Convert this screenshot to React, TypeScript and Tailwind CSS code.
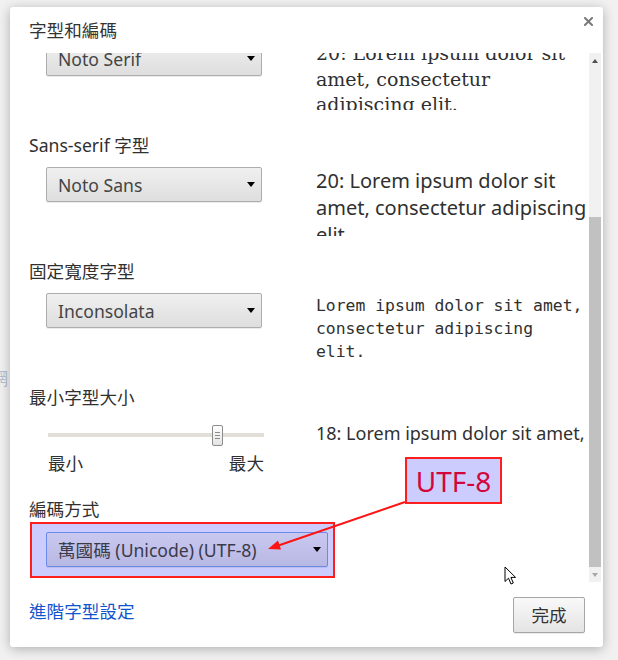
import { useLayoutEffect, useRef } from 'react';

function Caret({ color = 'border-t-black' }: { color?: string }) {
  return (
    <span
      className={`block h-0 w-0 border-x-4 border-t-[5px] border-x-transparent ${color}`}
    />
  );
}

interface SelectProps {
  value: string;
  className?: string;
}

function Select({ value, className = '' }: SelectProps) {
  return (
    <div
      className={`flex h-[35px] items-center justify-between rounded-[2px] border pl-[11px] pr-[6px] text-[17.6px] leading-[24px] shadow-[0_1px_0_rgba(0,0,0,0.08)] ${className}`}
    >
      <span className="whitespace-nowrap">{value}</span>
      <Caret />
    </div>
  );
}

const plainSelect =
  'w-[216px] border-[#adadad] bg-linear-to-b from-[#f0f0f0] to-[#dedede] text-[#444]';

function Section({
  label,
  children,
  className = '',
}: {
  label: string;
  children: React.ReactNode;
  className?: string;
}) {
  return (
    <div className={className}>
      <div className="text-[17.6px] leading-[24px]">{label}</div>
      {children}
    </div>
  );
}

function FontRow({
  font,
  sampleClass,
  lines,
}: {
  font: string;
  sampleClass: string;
  lines: string[];
}) {
  return (
    <div className="mt-[10px] flex h-[69px]">
      <div className="ml-[17px] shrink-0">
        <Select value={font} className={plainSelect} />
      </div>
      <div
        className={`ml-[54px] flex-1 overflow-hidden whitespace-nowrap text-[#303030] ${sampleClass}`}
      >
        {lines.map((line) => (
          <div key={line}>{line}</div>
        ))}
      </div>
    </div>
  );
}

export default function App() {
  const paneRef = useRef<HTMLDivElement>(null);

  // the settings pane is scrolled all the way down
  useLayoutEffect(() => {
    const el = paneRef.current;
    if (el) el.scrollTop = el.scrollHeight;
  }, []);

  return (
    <div className="relative h-[660px] w-[618px] overflow-hidden bg-[#f1f1f1] pl-[10px] pt-[7px] font-['Noto_Sans','Noto_Sans_CJK_TC',sans-serif] text-[#303030]">
      {/* page behind the overlay */}
      <span className="absolute left-[-9px] top-[367px] text-[17px] leading-[24px] text-[#b7bfcf]">
        網
      </span>

      {/* Dialog */}
      <div className="relative flex h-[640px] w-[593px] flex-col rounded-[3px] bg-white shadow-[0_2px_12px_rgba(0,0,0,0.28)]">
        <div className="h-[46px] shrink-0 pl-[19px] pt-[11px] text-[17.6px] leading-[24px] text-[#333]">
          字型和編碼
        </div>
        <button className="absolute right-[10px] top-[10px] flex h-[9px] w-[9px] items-center justify-center">
          <svg width="9" height="9" viewBox="0 0 9 9">
            <path
              d="M1 1 L8 8 M8 1 L1 8"
              stroke="#7a7a7a"
              strokeWidth="2"
              strokeLinecap="square"
            />
          </svg>
        </button>

        {/* Scrolling body */}
        <div className="flex h-[529px] shrink-0">
          <div ref={paneRef} className="flex-1 overflow-hidden pb-[4px] pl-[19px]">
            <Section label="標準字型" className="pt-[16px]">
              <FontRow
                font="Noto Sans CJK TC"
                sampleClass="text-[16px] leading-[22px]"
                lines={['16: Lorem ipsum dolor sit amet,', 'consectetur adipiscing elit.']}
              />
            </Section>

            <Section label="Serif 字型" className="mt-[23px]">
              <FontRow
                font="Noto Serif"
                sampleClass="font-['DejaVu_Serif',serif] text-[19px] leading-[25.5px]"
                lines={['20: Lorem ipsum dolor sit', 'amet, consectetur', 'adipiscing elit.']}
              />
            </Section>

            <Section label="Sans-serif 字型" className="mt-[23px]">
              <FontRow
                font="Noto Sans"
                sampleClass="text-[20px] leading-[27px]"
                lines={['20: Lorem ipsum dolor sit', 'amet, consectetur adipiscing', 'elit.']}
              />
            </Section>

            <Section label="固定寬度字型" className="mt-[23px]">
              <FontRow
                font="Inconsolata"
                sampleClass="font-['DejaVu_Sans_Mono',monospace] text-[16.4px] leading-[23px] pt-[1px]"
                lines={['Lorem ipsum dolor sit amet,', 'consectetur adipiscing', 'elit.']}
              />
            </Section>

            <Section label="最小字型大小" className="mt-[23px]">
              <div className="mt-[10px] flex h-[55px]">
                <div className="ml-[19px] w-[216px] shrink-0">
                  <div className="relative h-[32px]">
                    <div className="absolute left-0 right-0 top-[14px] h-[4px] bg-[#e2ded8]" />
                    <div className="absolute left-[164px] top-[6px] flex h-[21px] w-[11px] flex-col items-center justify-center gap-[2px] rounded-[2px] border border-[#8c8c8c] bg-linear-to-b from-white to-[#e4e4e4]">
                      <span className="h-px w-[5px] bg-[#8c8c8c]" />
                      <span className="h-px w-[5px] bg-[#8c8c8c]" />
                      <span className="h-px w-[5px] bg-[#8c8c8c]" />
                    </div>
                  </div>
                  <div className="flex justify-between text-[17.6px] leading-[24px]">
                    <span>最小</span>
                    <span>最大</span>
                  </div>
                </div>
                <div className="ml-[52px] mt-[2px] h-[30px] flex-1 overflow-hidden whitespace-nowrap text-[18px] leading-[24.5px]">
                  <div>18: Lorem ipsum dolor sit amet,</div>
                  <div>consectetur adipiscing elit.</div>
                </div>
              </div>
            </Section>

            <Section label="編碼方式" className="mt-[23px]">
              <div className="ml-[1px] mt-[1px] h-[56px] w-[305px] border-2 border-[#ff1e1e] bg-[#ccccff] pl-[14px] pt-[8px]">
                <Select
                  value="萬國碼 (Unicode) (UTF-8)"
                  className="w-[282px] border-[#6a8be6] bg-linear-to-b from-[#c8c8f0] to-[#b8b8e4] text-[#3a3a48]"
                />
              </div>
            </Section>
          </div>

          {/* Scrollbar */}
          <div className="mr-[2px] flex w-[12px] shrink-0 flex-col bg-[#f1f1f1]">
            <div className="flex h-[16px] items-center justify-center">
              <span className="block h-0 w-0 border-x-[3.5px] border-b-[4px] border-x-transparent border-b-[#505050]" />
            </div>
            <div className="flex flex-1 flex-col justify-end pb-[1px]">
              <div className="h-[350px] bg-[#c1c1c1]" />
            </div>
            <div className="flex h-[14px] items-center justify-center">
              <span className="block h-0 w-0 border-x-[3.5px] border-t-[4px] border-x-transparent border-t-[#a8a8a8]" />
            </div>
          </div>
        </div>

        {/* Footer */}
        <div className="flex flex-1 items-start justify-between pl-[19px] pr-[18px] pt-[15px]">
          <a className="mt-[2px] cursor-pointer text-[17.6px] leading-[24px] text-[#1155cc]">
            進階字型設定
          </a>
          <button className="h-[36px] w-[72px] rounded-[2px] border border-[#a6a6a6] bg-linear-to-b from-[#f9f9f9] to-[#e4e4e4] text-[17.6px] leading-[24px] text-[#333] shadow-[0_1px_0_rgba(0,0,0,0.08)]">
            完成
          </button>
        </div>
      </div>

      {/* Annotation: arrow from the callout to the encoding select */}
      <svg
        className="pointer-events-none absolute left-0 top-0"
        width="618"
        height="660"
        viewBox="0 0 618 660"
      >
        <line x1="405" y1="502" x2="277" y2="546" stroke="#ff1414" strokeWidth="2" />
        <polygon points="268,549 281,549.6 278,540.6" fill="#ff1414" />
      </svg>

      <div className="absolute left-[405px] top-[457px] flex h-[47px] w-[97px] items-center justify-center border-2 border-[#ff1e1e] bg-[#ccccff] text-[28px] leading-none text-[#d3063b]">
        UTF-8
      </div>

      {/* mouse cursor */}
      <svg
        className="pointer-events-none absolute left-[504px] top-[566px]"
        width="13"
        height="20"
        viewBox="0 0 13 20"
      >
        <path
          d="M1 1 L1 15.5 L4.5 12.2 L7 18 L9.3 17 L6.9 11.4 L11.6 11.4 Z"
          fill="white"
          stroke="black"
          strokeWidth="1"
          strokeLinejoin="miter"
        />
      </svg>
    </div>
  );
}
